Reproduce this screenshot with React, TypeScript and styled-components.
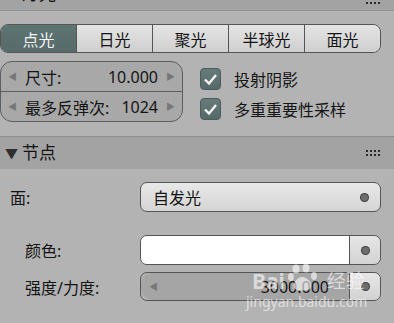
import React from 'react'
import styled, { createGlobalStyle } from 'styled-components'

const GlobalStyle = createGlobalStyle`
  html, body {
    margin: 0;
    padding: 0;
    background: #b3b3b3;
  }
  body {
    width: 394px;
    height: 323px;
    overflow: hidden;
    font-family: "Noto Sans", "Noto Sans CJK SC", sans-serif;
    font-size: 16px;
    color: #141414;
  }
`

const Page = styled.div`
  position: relative;
  width: 394px;
  height: 323px;
  overflow: hidden;
  background: #b3b3b3;
`

const PanelHeader = styled.div<{ $cut?: boolean }>`
  display: flex;
  align-items: ${({ $cut }) => ($cut ? 'flex-end' : 'center')};
  height: ${({ $cut }) => ($cut ? '11px' : '33px')};
  padding: ${({ $cut }) => ($cut ? '0 14px 6px 5px' : '0 14px 0 5px')};
  box-sizing: border-box;
  overflow: hidden;
  background: #a3a3a3;
  border-top: ${({ $cut }) => ($cut ? 'none' : '1px solid #8d8d8d')};
  border-bottom: ${({ $cut }) => ($cut ? '1px solid #939393' : 'none')};
  line-height: 20px;
  font-size: 17px;
`

const Arrow = styled.span`
  font-size: 13px;
  color: #2e2e2e;
  width: 17px;
`

const Title = styled.span`
  flex: 1;
`

const Grip = styled.div`
  display: grid;
  grid-template-columns: repeat(4, 2px);
  grid-template-rows: repeat(2, 2px);
  gap: 2px 2px;

  span {
    background: #2a2a2a;
  }
`

const LampBody = styled.div`
  padding: 13px 13px 12px 0;
  display: flex;
  flex-direction: column;
  gap: 8px;
`

const Tabs = styled.div`
  display: flex;
  height: 29px;
  border: 1px solid #555;
  border-radius: 8px;
  overflow: hidden;
  box-sizing: border-box;
`

const Tab = styled.div<{ $active?: boolean }>`
  flex: 1;
  display: flex;
  align-items: center;
  justify-content: center;
  background: ${({ $active }) =>
    $active ? 'linear-gradient(#5e7473, #566b6a)' : 'linear-gradient(#e4e4e4, #cfcfcf)'};
  color: ${({ $active }) => ($active ? '#f4f4f4' : '#141414')};
  border-left: 1px solid #555;

  &:first-child {
    border-left: none;
  }
`

const SettingsRow = styled.div`
  display: flex;
  align-items: flex-start;
`

const NumberStack = styled.div`
  width: 183px;
  border: 1px solid #5d5d5d;
  border-radius: 12px;
  overflow: hidden;
  background: #a8a8a8;
  box-sizing: border-box;
`

const NumberField = styled.div`
  display: flex;
  align-items: center;
  height: 29px;
  padding: 0 7px;
  gap: 8px;

  & + & {
    border-top: 1px solid #5d5d5d;
  }
`

const Spin = styled.span`
  font-size: 9px;
  color: #777;
`

const FieldLabel = styled.span`
  flex: 1;
`

const CheckList = styled.div`
  display: flex;
  flex-direction: column;
  margin-left: 17px;
  padding-top: 3px;
`

const CheckRow = styled.div`
  display: flex;
  align-items: center;
  height: 30px;
  gap: 13px;
`

const Box = styled.div`
  width: 21px;
  height: 22px;
  border-radius: 4px;
  background: linear-gradient(#667b7a, #56696a);
  border: 1px solid #4c5a5a;
  box-sizing: border-box;
  display: flex;
  align-items: center;
  justify-content: center;
`

const NodeBody = styled.div`
  display: flex;
  flex-direction: column;
  padding-top: 13px;
`

const NodeRow = styled.div<{ $gap: number; $height: number }>`
  display: grid;
  grid-template-columns: 140px 241px;
  height: ${({ $height }) => $height}px;
  margin-top: ${({ $gap }) => $gap}px;
`

const RowLabel = styled.div<{ $indent: number }>`
  display: flex;
  align-items: center;
  padding-left: ${({ $indent }) => $indent}px;
`

const Dropdown = styled.div`
  display: flex;
  align-items: center;
  justify-content: space-between;
  padding: 0 12px;
  border: 1px solid #555;
  border-radius: 7px;
  background: linear-gradient(#e8e8e8, #d5d5d5);
  box-sizing: border-box;
`

const Dot = styled.span`
  width: 7px;
  height: 7px;
  border-radius: 50%;
  background: #6d6d6d;
  box-shadow: 0 0 0 1px #3c3c3c;
`

const Split = styled.div`
  display: flex;
  border: 1px solid #555;
  border-radius: 7px;
  overflow: hidden;
  box-sizing: border-box;
`

const Swatch = styled.div`
  flex: 1;
  background: #ffffff;
`

const Slider = styled.div`
  flex: 1;
  display: flex;
  align-items: center;
  justify-content: space-between;
  padding: 0 20px 0 8px;
  background: #a5a5a5;
  border-radius: 12px 0 0 12px;
`

const SideButton = styled.div`
  width: 30px;
  display: flex;
  align-items: center;
  justify-content: center;
  border-left: 1px solid #555;
  background: linear-gradient(#e6e6e6, #d2d2d2);
`

const Watermark = styled.div`
  position: absolute;
  left: 246px;
  top: 263px;
  display: flex;
  flex-direction: column;
  align-items: flex-start;
  color: rgba(255, 255, 255, 0.6);
  pointer-events: none;
`

const MarkLine = styled.div`
  display: flex;
  align-items: flex-end;
  gap: 2px;
  padding-left: 6px;
  font-size: 21px;
  font-weight: bold;
  line-height: 24px;
`

const MarkCn = styled.span`
  font-size: 19px;
  font-weight: normal;
  margin-left: 4px;
`

const MarkUrl = styled.div`
  font-size: 14px;
  line-height: 15px;
  margin-top: 1px;
`

const Check = () => (
  <svg width="15" height="13" viewBox="0 0 15 13">
    <path d="M2 6.5 L6 10.5 L13 2" fill="none" stroke="#f2f2f2" strokeWidth="2.4" />
  </svg>
)

const Paw = () => (
  <svg width="34" height="30" viewBox="0 0 34 30" fill="rgba(255,255,255,0.6)">
    <ellipse cx="9" cy="6" rx="3.5" ry="4.5" />
    <ellipse cx="19" cy="5" rx="3.5" ry="4.5" />
    <ellipse cx="4" cy="14" rx="3" ry="4" />
    <ellipse cx="27" cy="13" rx="3" ry="4" />
    <path d="M8 26 C4 22 10 14 15 14 C21 14 27 22 23 26 C20 28 12 28 8 26 Z" />
  </svg>
)

const GripDots = () => (
  <Grip>
    {Array.from({ length: 8 }).map((_, i) => (
      <span key={i} />
    ))}
  </Grip>
)

const lightTypes = ['点光', '日光', '聚光', '半球光', '面光']

const App = (): React.ReactElement => (
  <Page>
    <GlobalStyle />
    <PanelHeader $cut>
      <Arrow>▼</Arrow>
      <Title>灯光</Title>
      <GripDots />
    </PanelHeader>
    <LampBody>
      <Tabs>
        {lightTypes.map((t, i) => (
          <Tab key={t} $active={i === 0}>
            {t}
          </Tab>
        ))}
      </Tabs>
      <SettingsRow>
        <NumberStack>
          <NumberField>
            <Spin>◀</Spin>
            <FieldLabel>尺寸:</FieldLabel>
            <span>10.000</span>
            <Spin>▶</Spin>
          </NumberField>
          <NumberField>
            <Spin>◀</Spin>
            <FieldLabel>最多反弹次:</FieldLabel>
            <span>1024</span>
            <Spin>▶</Spin>
          </NumberField>
        </NumberStack>
        <CheckList>
          <CheckRow>
            <Box>
              <Check />
            </Box>
            投射阴影
          </CheckRow>
          <CheckRow>
            <Box>
              <Check />
            </Box>
            多重重要性采样
          </CheckRow>
        </CheckList>
      </SettingsRow>
    </LampBody>
    <PanelHeader>
      <Arrow>▼</Arrow>
      <Title>节点</Title>
      <GripDots />
    </PanelHeader>
    <NodeBody>
      <NodeRow $gap={0} $height={30}>
        <RowLabel $indent={10}>面:</RowLabel>
        <Dropdown>
          自发光
          <Dot />
        </Dropdown>
      </NodeRow>
      <NodeRow $gap={23} $height={30}>
        <RowLabel $indent={25}>颜色:</RowLabel>
        <Split>
          <Swatch />
          <SideButton>
            <Dot />
          </SideButton>
        </Split>
      </NodeRow>
      <NodeRow $gap={7} $height={29}>
        <RowLabel $indent={25}>强度/力度:</RowLabel>
        <Split>
          <Slider>
            <Spin>◀</Spin>
            <span>3000.000</span>
          </Slider>
          <SideButton>
            <Dot />
          </SideButton>
        </Split>
      </NodeRow>
    </NodeBody>
    <Watermark>
      <MarkLine>
        Bai
        <Paw />
        <MarkCn>经验</MarkCn>
      </MarkLine>
      <MarkUrl>jingyan.baidu.com</MarkUrl>
    </Watermark>
  </Page>
)

export default App
